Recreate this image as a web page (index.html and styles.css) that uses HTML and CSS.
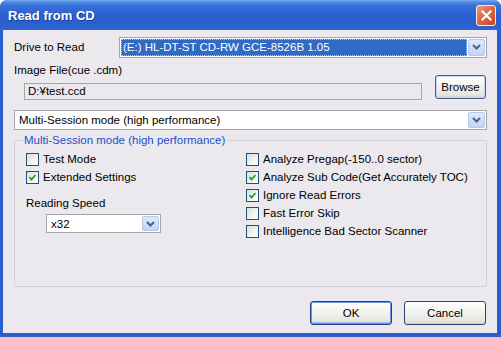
FILE: index.html
```html
<!DOCTYPE html>
<html>
<head>
<meta charset="utf-8">
<title>Read from CD</title>
<link rel="stylesheet" href="styles.css">
</head>
<body>
<div class="window">
  <div class="titlebar">
    <span class="title">Read from CD</span>
    <button class="close" aria-label="Close">
      <svg width="11" height="11" viewBox="0 0 11 11"><path d="M1.5 1.5 L9.5 9.5 M9.5 1.5 L1.5 9.5" stroke="#fff" stroke-width="2.2" stroke-linecap="square" fill="none"/></svg>
    </button>
  </div>
  <div class="client">
    <div class="row drive-row">
      <span class="label drive-label">Drive to Read</span>
      <div class="combo drive-combo">
        <div class="combo-value selected"><span class="focus">(E:) HL-DT-ST CD-RW GCE-8526B 1.05</span></div>
        <span class="combo-btn"><svg width="9" height="6" viewBox="0 0 9 6"><path d="M1 1 L4.5 4.5 L8 1" stroke="#4d6185" stroke-width="2" fill="none"/></svg></span>
      </div>
    </div>
    <div class="row image-row">
      <div class="image-col">
        <div class="label">Image File(cue .cdm)</div>
        <div class="field">D:¥test.ccd</div>
      </div>
      <button class="btn browse">Browse</button>
    </div>
    <div class="combo mode-combo">
      <div class="combo-value">Multi-Session mode (high performance)</div>
      <span class="combo-btn"><svg width="9" height="6" viewBox="0 0 9 6"><path d="M1 1 L4.5 4.5 L8 1" stroke="#4d6185" stroke-width="2" fill="none"/></svg></span>
    </div>
    <fieldset class="group">
      <legend>Multi-Session mode (high performance)</legend>
      <div class="group-grid">
        <div class="col">
          <label class="check"><span class="box"></span>Test Mode</label>
          <label class="check"><span class="box"><svg width="9" height="9" viewBox="0 0 9 9"><path d="M1.5 4 L3.5 6.5 L7.5 2" stroke="#21a121" stroke-width="1.8" fill="none"/></svg></span>Extended Settings</label>
          <div class="label speed-label">Reading Speed</div>
          <div class="combo speed-combo">
            <div class="combo-value">x32</div>
            <span class="combo-btn"><svg width="9" height="6" viewBox="0 0 9 6"><path d="M1 1 L4.5 4.5 L8 1" stroke="#4d6185" stroke-width="2" fill="none"/></svg></span>
          </div>
        </div>
        <div class="col">
          <label class="check"><span class="box"></span>Analyze Pregap(-150..0 sector)</label>
          <label class="check"><span class="box"><svg width="9" height="9" viewBox="0 0 9 9"><path d="M1.5 4 L3.5 6.5 L7.5 2" stroke="#21a121" stroke-width="1.8" fill="none"/></svg></span>Analyze Sub Code(Get Accurately TOC)</label>
          <label class="check"><span class="box"><svg width="9" height="9" viewBox="0 0 9 9"><path d="M1.5 4 L3.5 6.5 L7.5 2" stroke="#21a121" stroke-width="1.8" fill="none"/></svg></span>Ignore Read Errors</label>
          <label class="check"><span class="box"></span>Fast Error Skip</label>
          <label class="check"><span class="box"></span>Intelligence Bad Sector Scanner</label>
        </div>
      </div>
    </fieldset>
    <div class="buttons">
      <button class="btn default">OK</button>
      <button class="btn">Cancel</button>
    </div>
  </div>
</div>
</body>
</html>
```
FILE: styles.css
```css
* { box-sizing: border-box; }
html, body { margin: 0; padding: 0; background: #ffffff; }
body {
  width: 501px;
  height: 337px;
  overflow: hidden;
  font-family: "Liberation Sans", Arial, sans-serif;
  font-size: 11.5px;
  color: #000;
}
.window {
  width: 501px;
  height: 337px;
  display: flex;
  flex-direction: column;
  border-radius: 7px 7px 0 0;
  background: #2a5fd0;
  overflow: hidden;
}
.titlebar {
  height: 30px;
  flex: none;
  display: flex;
  align-items: center;
  justify-content: space-between;
  padding: 0 5px 0 8px;
  background: linear-gradient(#7aaef0 0px, #4f8ae4 2px, #3670d8 6px, #2c63cf 14px, #2a5fcd 24px, #2f66d3 30px);
}
.title {
  color: #fff;
  font-weight: bold;
  font-size: 13px;
  text-shadow: 1px 1px 0 #1a3e98;
  margin-top: 1px;
}
.close {
  width: 20px;
  height: 21px;
  margin-top: 1px;
  padding: 0;
  border: 1px solid #f2f0f0;
  border-radius: 3px;
  background: linear-gradient(135deg, #ec9a7c 0%, #df6a45 45%, #c8441e 100%);
  display: flex;
  align-items: center;
  justify-content: center;
}
.client {
  flex: 1;
  margin: 0 4px 4px 3px;
  background: #ebe9ed;
  padding: 7px 10px 0 11px;
  display: flex;
  flex-direction: column;
}
.label { line-height: 14px; white-space: nowrap; }
.row { display: flex; }
.drive-row { align-items: center; height: 20px; }
.drive-label { width: 105px; flex: none; }
.combo {
  display: flex;
  align-items: center;
  background: #fff;
  border: 1px solid #a5a5a9;
  padding: 1px;
}
.drive-combo { flex: 1; height: 21px; }
.combo-value {
  flex: 1;
  height: 100%;
  display: flex;
  align-items: center;
  padding-left: 3px;
  white-space: nowrap;
  overflow: hidden;
}
.combo-value.selected {
  background: #316ac5;
  color: #fff;
  padding: 0;
  margin-right: 1px;
}
.focus {
  display: flex;
  align-items: center;
  width: 100%;
  height: 100%;
  padding-left: 1px;
  border: 1px dotted #e8c060;
}
.combo-btn {
  width: 17px;
  height: 100%;
  flex: none;
  display: flex;
  align-items: center;
  justify-content: center;
  border: 1px solid #b7c7e7;
  border-radius: 2px;
  background: linear-gradient(#dfe8fb, #c3d3f5);
}
.image-row { margin-top: 6px; align-items: flex-end; }
.image-col { display: flex; flex-direction: column; }
.field {
  margin: 6px 0 0 10px;
  width: 398px;
  height: 17px;
  border: 1px solid #a5a5a9;
  background: #ebe9ed;
  padding-left: 3px;
  line-height: 15px;
}
.btn {
  font-family: "Liberation Sans", Arial, sans-serif;
  font-size: 11.5px;
  color: #000;
  padding: 0;
  border: 1px solid #2b4570;
  border-radius: 3px;
  background: linear-gradient(#ffffff 0%, #f4f4f2 40%, #e6e5df 85%, #d6d0c5 100%);
}
.browse {
  width: 51px;
  height: 24px;
  margin: 0 0 1px 13px;
  border-color: #3e5f9a;
  box-shadow: inset 0 0 0 1px #c3d4f0;
}
.mode-combo { margin-top: 10px; height: 20px; }
.group {
  margin: 3px 0 0 0;
  padding: 3px 0 0 11px;
  border: 1px solid #d2d0d6;
  border-radius: 3px;
  height: 154px;
}
.group legend {
  color: #1d4fc7;
  padding: 0 2px 0 1px;
  margin-left: -3px;
  line-height: 14px;
}
.group-grid {
  display: grid;
  grid-template-columns: 220px 1fr;
}
.col { display: flex; flex-direction: column; }
.check {
  display: flex;
  align-items: center;
  height: 18px;
  white-space: nowrap;
}
.box {
  width: 13px;
  height: 13px;
  flex: none;
  margin-right: 4px;
  border: 1px solid #1c5180;
  background: linear-gradient(135deg, #dcdcd7 0%, #f4f4f2 60%, #ffffff 100%);
  display: flex;
  align-items: center;
  justify-content: center;
}
.speed-label { margin-top: 10px; }
.speed-combo {
  margin: 4px 0 0 20px;
  width: 115px;
  height: 19px;
}
.buttons {
  display: flex;
  justify-content: flex-end;
  gap: 12px;
  margin-top: 14px;
  padding-right: 1px;
}
.buttons .btn { width: 82px; height: 24px; }
.btn.default {
  border-color: #22418a;
  box-shadow: inset 0 0 0 1px #6b94e0, inset 0 -1px 0 1px #a8c1ee;
}
```
